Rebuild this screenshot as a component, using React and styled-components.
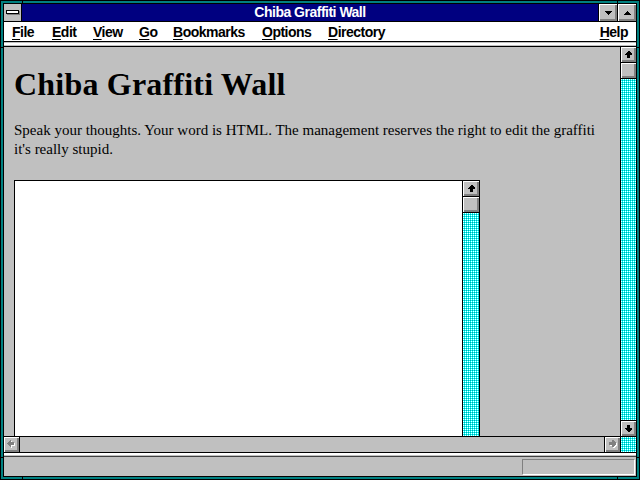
import React from 'react';
import styled, { createGlobalStyle } from 'styled-components';

const GlobalStyle = createGlobalStyle`
  html, body {
    margin: 0;
    padding: 0;
    background: #008080;
    overflow: hidden;
  }
  * {
    box-sizing: border-box;
  }
`;

const menuItems = [
  { label: 'File', w: 40 },
  { label: 'Edit', w: 41 },
  { label: 'View', w: 46 },
  { label: 'Go', w: 34 },
  { label: 'Bookmarks', w: 89 },
  { label: 'Options', w: 66 },
  { label: 'Directory', w: 90 },
];

// flechas de los botones de scroll
function UpArrow({ flip }) {
  return (
    <svg width="7" height="7" viewBox="0 0 7 7" shapeRendering="crispEdges"
      style={flip ? { transform: 'scaleY(-1)' } : undefined}>
      <polygon points="3,0 4,0 7,3 7,4 5,4 5,7 2,7 2,4 0,4 0,3" fill="#000" />
    </svg>
  );
}

function GreyArrow({ right }) {
  const pts = '0,3 0,4 3,7 4,7 4,5 7,5 7,2 4,2 4,0 3,0';
  return (
    <svg width="9" height="9" viewBox="0 0 9 9" shapeRendering="crispEdges"
      style={right ? { transform: 'scaleX(-1)' } : undefined}>
      <polygon points={pts} fill="#fff" transform={right ? 'translate(0 1)' : 'translate(1 1)'} />
      <polygon points={pts} fill="#808080" transform={right ? 'translate(1 0)' : 'translate(0 0)'} />
    </svg>
  );
}

function Triangle({ up }) {
  return (
    <svg width="7" height="4" viewBox="0 0 7 4" shapeRendering="crispEdges">
      <polygon points={up ? '3.5,0 7,4 0,4' : '0,0 7,0 3.5,4'} fill="#000" />
    </svg>
  );
}

export default function App() {
  return (
    <>
      <GlobalStyle />
      <Window>
        <VNotch style={{ left: 21, top: 0 }} />
        <VNotch style={{ left: 616, top: 0 }} />
        <VNotch style={{ left: 21, bottom: 0 }} />
        <VNotch style={{ left: 616, bottom: 0 }} />
        <HNotch style={{ top: 46, left: 0 }} />
        <HNotch style={{ top: 46, right: 0 }} />
        <HNotch style={{ top: 456, left: 0 }} />
        <HNotch style={{ top: 456, right: 0 }} />

        <Frame>
          {/* barra de título */}
          <TitleBar>
            <SysMenu>
              <SysBar />
            </SysMenu>
            <TitleText>Chiba Graffiti Wall</TitleText>
            <TitleButton><Triangle /></TitleButton>
            <TitleButton><Triangle up /></TitleButton>
          </TitleBar>

          {/* menú */}
          <MenuBar>
            {menuItems.map((m) => (
              <MenuItem key={m.label} $w={m.w}>
                <MenuKey>{m.label[0]}</MenuKey>{m.label.slice(1)}
              </MenuItem>
            ))}
            <HelpItem><MenuKey>H</MenuKey>elp</HelpItem>
          </MenuBar>

          <ToolBand />

          <Middle>
            <LeftCol>
              <Content>
                <Heading>Chiba Graffiti Wall</Heading>
                <Lead>
                  Speak your thoughts. Your word is HTML. The management reserves the right to edit the graffiti
                  <br />
                  it's really stupid.
                </Lead>
                <Wall>
                  <WallText />
                  <WallScroll>
                    <ScrollButton><UpArrow /></ScrollButton>
                    <ScrollButton />
                    <Track />
                  </WallScroll>
                </Wall>
              </Content>
              <HScroll>
                <HButton><GreyArrow /></HButton>
                <HTrack />
                <HButton $right><GreyArrow right /></HButton>
              </HScroll>
            </LeftCol>
            <VScroll>
              <ScrollButton><UpArrow /></ScrollButton>
              <ScrollButton />
              <Track />
              <ScrollButton $down><UpArrow flip /></ScrollButton>
              <Track $h={15} />
            </VScroll>
          </Middle>

          <StatusBand />
          <StatusBar>
            <StatusBox />
          </StatusBar>
        </Frame>
      </Window>
    </>
  );
}

const bevel = `
  background-color: #c0c0c0;
  box-shadow: inset 1px 1px 0 #fff, inset -1px -1px 0 #808080, inset -2px -2px 0 #808080;
`;

const Window = styled.div`
  position: relative;
  width: 640px;
  height: 480px;
  background: #008080;
  border: 1px solid #000;
  padding: 2px;
`;

// muescas del marco de la ventana
const VNotch = styled.span`
  position: absolute;
  width: 1px;
  height: 2px;
  background: #000;
`;

const HNotch = styled.span`
  position: absolute;
  width: 2px;
  height: 1px;
  background: #000;
`;

const Frame = styled.div`
  width: 100%;
  height: 100%;
  border: 1px solid #000;
  display: flex;
  flex-direction: column;
  background: #c0c0c0;
`;

const TitleBar = styled.div`
  display: flex;
  height: 18px;
  flex-shrink: 0;
  background: #000080;
  border-bottom: 1px solid #000;
`;

const SysMenu = styled.div`
  width: 18px;
  display: flex;
  align-items: center;
  justify-content: center;
  background: #c0c0c0;
  border-right: 1px solid #000;
`;

const SysBar = styled.div`
  width: 13px;
  height: 4px;
  background: #fff;
  border: 1px solid #000;
  box-shadow: 1px 1px 0 #808080;
  margin-top: -1px;
`;

const TitleText = styled.div`
  flex: 1;
  text-align: center;
  color: #fff;
  font-family: "Liberation Sans", Arial, sans-serif;
  font-weight: bold;
  font-size: 14px;
  letter-spacing: -0.5px;
  line-height: 17px;
`;

const TitleButton = styled.div`
  width: 19px;
  display: flex;
  align-items: center;
  justify-content: center;
  border-left: 1px solid #000;
  ${bevel}
`;

const MenuBar = styled.div`
  display: flex;
  align-items: center;
  height: 20px;
  flex-shrink: 0;
  padding: 1px 8px 0 8px;
  background: #fff;
  border-bottom: 1px solid #000;
  font-family: "Liberation Sans", Arial, sans-serif;
  font-weight: bold;
  font-size: 14px;
  letter-spacing: -0.5px;
  color: #000;
`;

const MenuItem = styled.div`
  width: ${(p) => p.$w}px;
  white-space: nowrap;
`;

const HelpItem = styled.div`
  margin-left: auto;
`;

const MenuKey = styled.u`
  text-decoration-thickness: 1px;
  text-underline-offset: 2px;
`;

const ToolBand = styled.div`
  height: 5px;
  flex-shrink: 0;
  background: linear-gradient(to bottom, #c0c0c0 0 1px, #fff 1px 3px, #c0c0c0 3px);
  border-bottom: 1px solid #000;
`;

const Middle = styled.div`
  display: flex;
  height: 406px;
  flex-shrink: 0;
  border-bottom: 1px solid #000;
`;

const LeftCol = styled.div`
  width: 616px;
  display: flex;
  flex-direction: column;
`;

const Content = styled.div`
  flex: 1;
  overflow: hidden;
  padding: 19px 0 0 10px;
  background: #c0c0c0;
  color: #000;
  font-family: "Liberation Serif", "Times New Roman", serif;
`;

const Heading = styled.h1`
  margin: 0 0 19px 0;
  font-size: 32px;
  line-height: 36px;
  font-weight: bold;
  letter-spacing: 0.2px;
`;

const Lead = styled.p`
  margin: 0 0 21px 0;
  font-size: 15px;
  line-height: 19px;
  white-space: nowrap;
`;

const Wall = styled.div`
  display: flex;
  width: 466px;
  height: 300px;
  background: #fff;
  border: 1px solid #000;
`;

const WallText = styled.div`
  flex: 1;
  background: #fff;
`;

const WallScroll = styled.div`
  width: 17px;
  display: flex;
  flex-direction: column;
  border-left: 1px solid #000;
`;

const VScroll = styled.div`
  width: 16px;
  display: flex;
  flex-direction: column;
  border-left: 1px solid #000;
`;

const ScrollButton = styled.div`
  height: ${(p) => (p.$down ? 17 : 16)}px;
  flex-shrink: 0;
  display: flex;
  align-items: center;
  justify-content: center;
  border-top: ${(p) => (p.$down ? '1px solid #000' : 'none')};
  border-bottom: 1px solid #000;
  ${bevel}
`;

// pista cian con trama
const Track = styled.div`
  ${(p) => (p.$h ? `height: ${p.$h}px; flex-shrink: 0;` : 'flex: 1;')}
  background-color: #00ffff;
  background-image: conic-gradient(at 1px 1px, #00ffff 0 25%, #00a8a8 0 50%, #00ffff 0 75%, #ffffff 0);
  background-size: 2px 2px;
`;

const HScroll = styled.div`
  display: flex;
  height: 16px;
  flex-shrink: 0;
  border-top: 1px solid #000;
`;

const HButton = styled.div`
  width: 16px;
  display: flex;
  align-items: center;
  justify-content: center;
  ${(p) => (p.$right ? 'border-left: 1px solid #000;' : 'border-right: 1px solid #000;')}
  ${bevel}
`;

const HTrack = styled.div`
  flex: 1;
  background: #c0c0c0;
`;

const StatusBand = styled.div`
  height: 4px;
  flex-shrink: 0;
  background: linear-gradient(to bottom, #fff 0 2px, #c0c0c0 2px 3px, #404040 3px);
`;

const StatusBar = styled.div`
  flex: 1;
  display: flex;
  justify-content: flex-end;
  padding: 2px 1px 1px 0;
  background: #c0c0c0;
`;

const StatusBox = styled.div`
  width: 113px;
  height: 16px;
  border-top: 1px solid #808080;
  border-left: 1px solid #808080;
  border-bottom: 1px solid #fff;
  border-right: 1px solid #fff;
`;
